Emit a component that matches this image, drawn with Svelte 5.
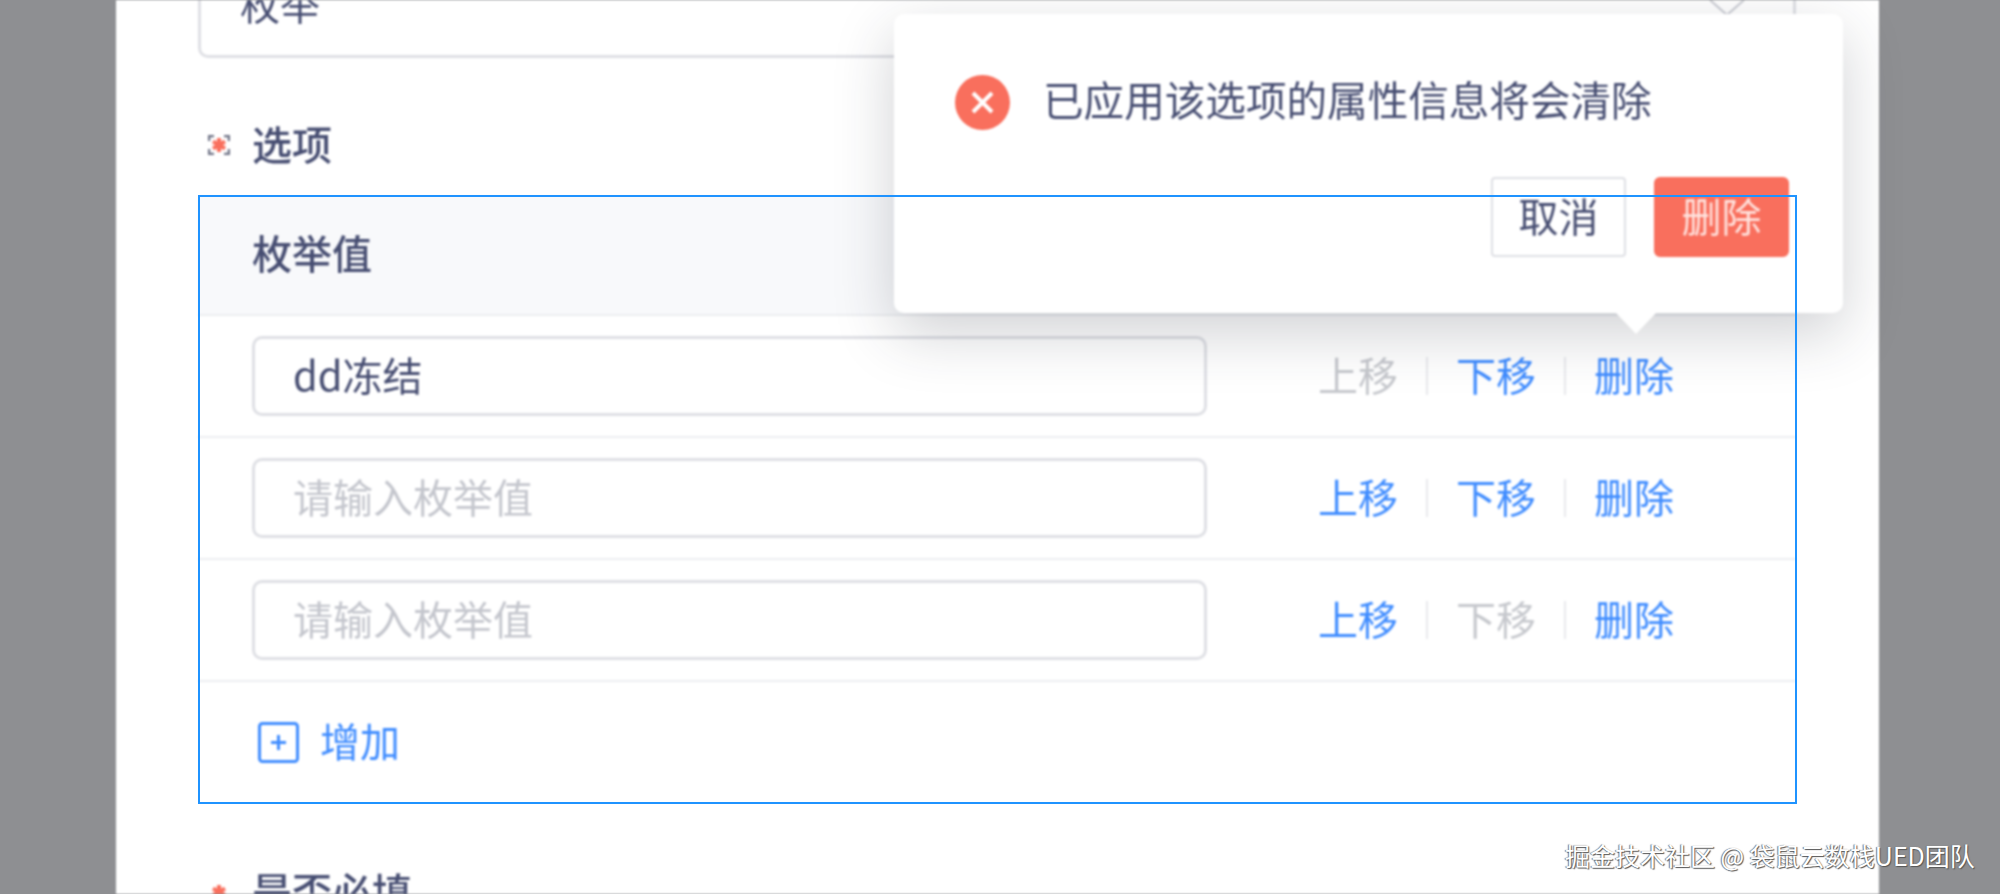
<script>
  const rows = [
    { value: 'dd冻结', upOff: true, downOff: false },
    { value: '', upOff: false, downOff: false },
    { value: '', upOff: false, downOff: true },
  ];
</script>

{#snippet star(brackets)}
  <svg class="star" viewBox="0 0 22 20" aria-hidden="true">
    {#if brackets}
      <path d="M1 6V1h5M16 1h5v5M21 14v5h-5M6 19H1v-5" fill="none" stroke="#6f7386" stroke-width="2.5" />
    {/if}
    <path d="M11 3v14M5 6.5l12 7M17 6.5l-12 7" fill="none" stroke="#f96f5d" stroke-width="4" />
  </svg>
{/snippet}

<div class="page">
  <div class="panel">
    <div class="select">
      <span>枚举</span>
      <svg class="chevron" viewBox="0 0 36 16" aria-hidden="true">
        <path d="M1 0l17 15L35 0" fill="none" stroke="#c9cbd2" stroke-width="2" />
      </svg>
    </div>

    <div class="label first">
      {@render star(true)}
      <span>选项</span>
    </div>

    <div class="table">
      <div class="head">枚举值</div>
      {#each rows as row}
        <div class="row">
          <div class="input" class:empty={!row.value}>{row.value || '请输入枚举值'}</div>
          <div class="actions">
            <span class="link" class:off={row.upOff}>上移</span>
            <i class="sep"></i>
            <span class="link" class:off={row.downOff}>下移</span>
            <i class="sep"></i>
            <span class="link">删除</span>
          </div>
        </div>
      {/each}
      <div class="foot">
        <svg class="plus" viewBox="0 0 41 41" aria-hidden="true">
          <rect x="1.5" y="1.5" width="38" height="38" rx="3" fill="none" stroke="#3f8cff" stroke-width="3" />
          <path d="M13 20.5h15M20.5 13v15" fill="none" stroke="#3f8cff" stroke-width="3" />
        </svg>
        <span class="link">增加</span>
      </div>
    </div>

    <div class="label second">
      {@render star(false)}
      <span>是否必填</span>
    </div>
  </div>

  <div class="popover">
    <div class="message">
      <svg class="error" viewBox="0 0 55 55" aria-hidden="true">
        <circle cx="27.5" cy="27.5" r="27.5" fill="#f96f5d" />
        <path d="M18 18l19 19M37 18L18 37" fill="none" stroke="#fff" stroke-width="4" />
      </svg>
      <span class="message-text">已应用该选项的属性信息将会清除</span>
    </div>
    <div class="buttons">
      <div class="btn">取消</div>
      <div class="btn danger">删除</div>
    </div>
    <i class="arrow"></i>
  </div>
</div>

<div class="frame"></div>
<div class="watermark">掘金技术社区 @ 袋鼠云数栈UED团队</div>

<style>
  :global(body) {
    background: #8e8f92;
    overflow: hidden;
  }

  .page {
    position: relative;
    height: 894px;
    overflow: hidden;
    font-family: "Noto Sans CJK SC", "Noto Sans", sans-serif;
    font-size: 40px;
    color: #474e72;
    filter: blur(1.1px);
  }

  .panel {
    box-sizing: border-box;
    height: 916px;
    margin: 0 121px 0 116px;
    padding: 0 83px 0 82px;
    background: #fff;
  }

  .select {
    position: relative;
    box-sizing: border-box;
    display: flex;
    align-items: center;
    height: 80px;
    margin-top: -22px;
    padding: 0 0 30px 39px;
    border: 3px solid #dfe0e5;
    border-radius: 10px;
  }

  .chevron {
    position: absolute;
    top: 19px;
    right: 48px;
    width: 36px;
    height: 16px;
  }

  .label {
    display: flex;
    align-items: center;
    height: 56px;
    font-weight: 500;
    line-height: 56px;
  }

  .label span {
    margin: -4px 0 0 -1px;
  }

  .label.first {
    margin: 59px 0 23px;
  }

  .label.second {
    margin-top: 61px;
  }

  .star {
    width: 22px;
    height: 20px;
    margin: 0 23px 0 10px;
  }

  .table {
    display: flex;
    flex-direction: column;
  }

  .head {
    box-sizing: border-box;
    display: flex;
    align-items: center;
    height: 120px;
    padding-left: 54px;
    padding-bottom: 6px;
    background: #f8f9fb;
    border-bottom: 2px solid #eceef1;
    font-weight: 500;
  }

  .row {
    box-sizing: border-box;
    display: flex;
    align-items: center;
    height: 122px;
    padding-left: 54px;
    border-bottom: 2px solid #eceef1;
  }

  .input {
    box-sizing: border-box;
    display: flex;
    align-items: center;
    width: 955px;
    height: 80px;
    padding: 0 0 4px 38px;
    border: 3px solid #dfe0e5;
    border-radius: 10px;
  }

  .input.empty {
    color: #c4c6cd;
  }

  .actions {
    display: flex;
    align-items: center;
    margin-left: 111px;
    padding-bottom: 4px;
  }

  .link {
    color: #3f8cff;
  }

  .link.off {
    color: #c6c8cd;
  }

  .sep {
    width: 2px;
    height: 38px;
    margin: 4px 28px 0;
    background: #e8e9ec;
  }

  .foot {
    display: flex;
    align-items: center;
    gap: 21px;
    height: 121px;
    padding-left: 60px;
  }

  .foot .link {
    padding-bottom: 5px;
  }

  .plus {
    width: 41px;
    height: 41px;
  }

  .popover {
    position: absolute;
    top: 14px;
    left: 894px;
    box-sizing: border-box;
    width: 949px;
    height: 299px;
    padding: 61px 54px 0 61px;
    background: #fff;
    border-radius: 10px;
    box-shadow: 0 20px 60px rgba(40, 44, 60, 0.22);
  }

  .message {
    display: flex;
    align-items: center;
    gap: 33px;
    height: 55px;
  }

  .message-text {
    font-size: 40.6px;
    padding-bottom: 8px;
  }

  .error {
    width: 55px;
    height: 55px;
  }

  .buttons {
    display: flex;
    justify-content: flex-end;
    gap: 28px;
    margin-top: 47px;
  }

  .btn {
    box-sizing: border-box;
    display: flex;
    align-items: center;
    justify-content: center;
    width: 135px;
    height: 80px;
    padding-bottom: 4px;
    border: 2px solid #dfe0e5;
    border-radius: 4px;
  }

  .btn.danger {
    margin-left: 0;
    background: #f96f5d;
    border-color: #f96f5d;
    border-radius: 6px;
    color: #ffe3de;
  }

  .arrow {
    position: absolute;
    top: 299px;
    left: 722px;
    width: 0;
    height: 0;
    border-top: 21px solid #fff;
    border-left: 20px solid transparent;
    border-right: 20px solid transparent;
  }

  .frame {
    position: absolute;
    top: 195px;
    left: 198px;
    box-sizing: border-box;
    width: 1599px;
    height: 609px;
    border: 2px solid #1f93ff;
    pointer-events: none;
  }

  .watermark {
    position: absolute;
    top: 838px;
    left: 1565px;
    font-family: "Noto Sans CJK SC", "Noto Sans", sans-serif;
    font-size: 25px;
    line-height: 34px;
    white-space: nowrap;
    color: #fff;
    text-shadow: 1px 1px 1px #555, -1px 0 1px #777;
  }
</style>
